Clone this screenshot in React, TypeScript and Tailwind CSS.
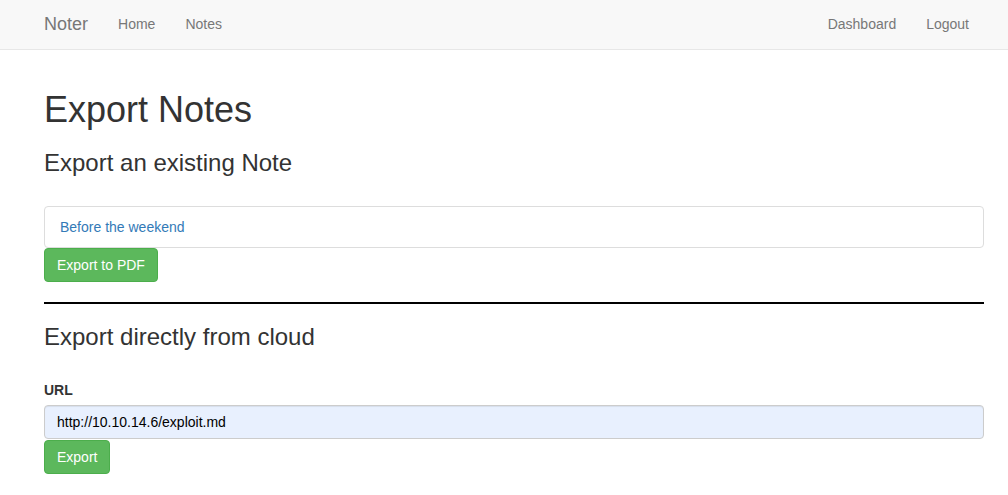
export default function App() {
  return (
    <div className="min-h-[495px] bg-white text-[14px] leading-[20px] text-[#333]" style={{ fontFamily: '"Liberation Sans", Arial, sans-serif' }}>
      <nav className="h-[50px] border-b border-[#e7e7e7] bg-[#f8f8f8]">
        <div className="flex w-[955px] ml-[29px] items-center justify-between h-[49px] pb-[1px]">
          <div className="flex items-center">
            <a className="px-[15px] text-[18px] leading-[20px] text-[#777]">Noter</a>
            <a className="px-[15px] text-[#777]">Home</a>
            <a className="px-[15px] text-[#777]">Notes</a>
          </div>
          <div className="flex items-center">
            <a className="px-[15px] text-[#777]">Dashboard</a>
            <a className="px-[15px] text-[#777]">Logout</a>
          </div>
        </div>
      </nav>
      <main className="ml-[44px] w-[940px]">
        <h1 className="pt-[40px] text-[36px] leading-[1.1] font-medium">Export Notes</h1>
        <h3 className="mt-[20px] text-[24px] leading-[1.1] font-medium">Export an existing Note</h3>
        <div className="mt-[30px] rounded-[4px] border border-[#ddd] px-[15px] py-[10px]">
          <a className="text-[#337ab7]">Before the weekend</a>
        </div>
        <button className="block rounded-[4px] border border-[#4cae4c] bg-[#5cb85c] px-[12px] py-[6px] text-white leading-[20px]">Export to PDF</button>
        <hr className="mt-[20px] border-0 border-t-2 border-black" />
        <h3 className="mt-[20px] text-[24px] leading-[1.1] font-medium">Export directly from cloud</h3>
        <label className="mt-[30px] mb-[5px] block font-bold">URL</label>
        <div className="h-[34px] rounded-[4px] border border-[#ccc] bg-[#e8f0fe] px-[12px] py-[6px] text-black leading-[20px] shadow-[inset_0_1px_1px_rgba(0,0,0,0.075)]">http://10.10.14.6/exploit.md</div>
        <button className="mt-[1px] block rounded-[4px] border border-[#4cae4c] bg-[#5cb85c] px-[12px] py-[6px] text-white leading-[20px]">Export</button>
      </main>
    </div>
  );
}
